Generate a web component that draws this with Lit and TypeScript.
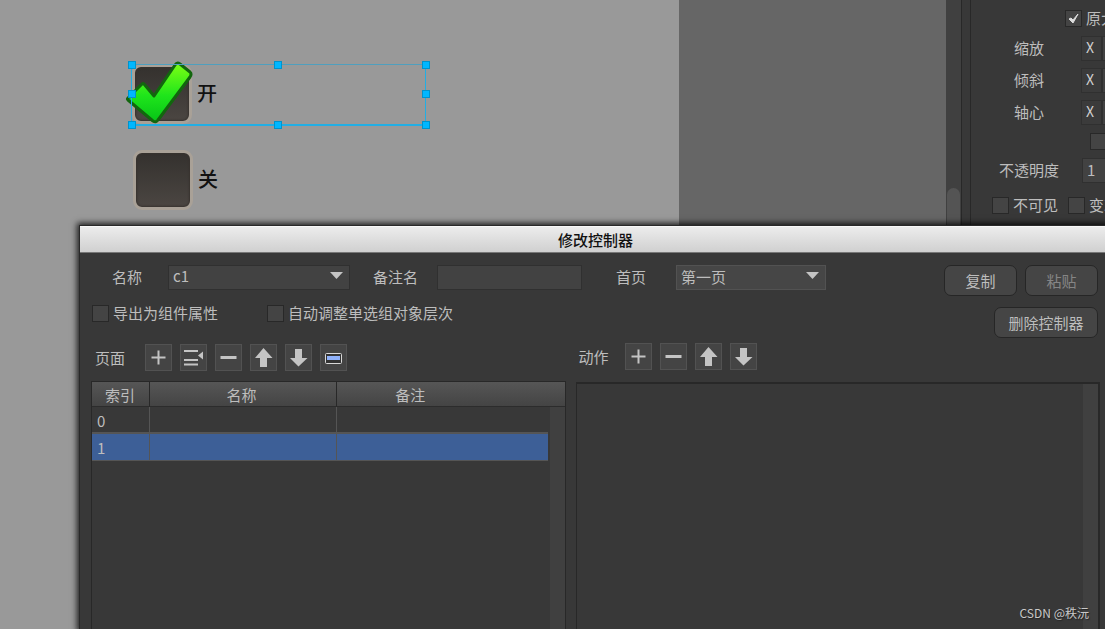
import { LitElement, html, css, svg } from "lit";
import { customElement, property, state } from "lit/decorators.js";

const glyphs: Record<string, unknown> = {
  add: svg`<path d="M13.5 6.5v14M6.5 13.5h14" stroke="#c4c4c4" stroke-width="2" fill="none"/>`,
  insert: svg`<path d="M4 7h14M4 16h14M4 20.5h14" stroke="#c4c4c4" stroke-width="2" fill="none"/><path d="M23 7.5v8l-5-4z" fill="#c4c4c4"/>`,
  remove: svg`<path d="M5.5 13.5h16" stroke="#c4c4c4" stroke-width="3" fill="none"/>`,
  up: svg`<path d="M13.5 4l9 10h-5.5v9h-7v-9H5z" fill="#c4c4c4"/>`,
  down: svg`<path d="M13.5 22.5l9-8.500h-5.5V5h-7v9H5z" fill="#c4c4c4"/>`,
  field: svg`<rect x="5.500" y="9.500" width="16" height="10" rx="1" fill="#333" stroke="#d8d8d8"/><rect x="7" y="12" width="13" height="4" fill="#8fb1fa"/>`,
};

@customElement("tool-button")
export class ToolButton extends LitElement {
  @property() icon = "add";
  @property() label = "";

  static styles = css`
    :host {
      display: block;
    }
    .tool {
      display: block;
      width: 27px;
      height: 27px;
      padding: 0;
      border: 1px solid #525252;
      background: #444;
    }
    .tool svg {
      display: block;
      margin: -1px;
    }
  `;

  render() {
    return html`<button class="tool" type="button" aria-label=${this.label}>
      <svg width="27" height="27" viewBox="0 0 27 27">${glyphs[this.icon]}</svg>
    </button>`;
  }
}

@customElement("app-root")
export class AppRoot extends LitElement {
  @state() private selected = 1;

  static styles = css`
    :host {
      display: block;
      position: relative;
      height: 100vh;
      overflow: hidden;
      background: #383838;
      color: #bdbdbd;
      font: 15px/20px "Noto Sans CJK SC", sans-serif;
    }
    * {
      box-sizing: border-box;
    }
    input,
    select,
    button {
      margin: 0;
      font: inherit;
      color: inherit;
      border-radius: 0;
      outline: none;
    }

    .workspace {
      display: flex;
      height: 100%;
    }
    .canvas {
      position: relative;
      flex: 679 1 0;
      background: #999;
    }
    .outside {
      flex: 267 1 0;
      background: #666;
    }
    .scrollbar {
      width: 15px;
      padding-top: 188px;
      background: #404040;
    }
    .thumb {
      height: 160px;
      margin: 0 1px;
      border-radius: 7px;
      background: #545454;
    }
    .splitter {
      width: 10px;
      border: 1px solid #282828;
      border-width: 0 1px;
    }

    .toggle {
      position: absolute;
      display: flex;
      align-items: center;
      gap: 5px;
      color: #111;
      font-size: 20px;
      font-weight: 500;
      line-height: 30px;
    }
    .toggle-on {
      left: 132px;
      top: 64px;
    }
    .toggle-off {
      left: 133px;
      top: 150px;
    }
    .toggle span {
      padding-bottom: 2px;
    }
    .big-box {
      appearance: none;
      width: 60px;
      height: 60px;
      border: 3px solid #a9a197;
      border-radius: 9px;
      background: linear-gradient(#34312e, #4b4642);
      box-shadow: inset 0 0 2px 1px #38332f;
    }
    .tick {
      position: absolute;
      left: -8px;
      top: -4px;
    }
    .selection {
      position: absolute;
      left: 131px;
      top: 64px;
      width: 295px;
      height: 62px;
      border: 1px solid #22aee4;
      border-bottom-width: 2px;
      border-top-color: #4f9fbe;
    }
    .handle {
      position: absolute;
      width: 8px;
      height: 8px;
      margin: -4px;
      border: 1px solid #0093cc;
      background: #00b7ff;
    }
    .w { left: 0; }
    .c { left: calc(50% - 1px); }
    .e { left: calc(100% + 1px); }
    .n { top: 0; }
    .m { top: calc(50% - 1px); }
    .s { top: calc(100% + 1px); }

    .inspector {
      width: 134px;
      padding-top: 4px;
      overflow: hidden;
      white-space: nowrap;
    }
    .prop {
      display: flex;
      align-items: center;
      height: 32px;
      padding-left: 43px;
    }
    .prop-size {
      height: 28px;
      padding-left: 94px;
    }
    .prop-lock {
      height: 26px;
      padding-left: 119px;
    }
    .prop-alpha {
      padding-left: 28px;
      gap: 23px;
    }
    .prop-flags {
      height: 38px;
      padding-left: 21px;
      gap: 10px;
    }
    .prop-name {
      width: 67px;
      flex: none;
    }
    .axis {
      flex: none;
      width: 21px;
      height: 25px;
      padding: 0 4px;
      border: 1px solid #303030;
      background: #3b3b3b;
      font-size: 14px;
      line-height: 21px;
      color: #d0d0d0;
    }
    .field {
      flex: none;
      width: 60px;
      height: 25px;
      padding: 0 4px 2px;
      border: 1px solid #303030;
      background: #424242;
    }

    .check {
      display: flex;
      align-items: center;
      gap: 4px;
      flex: none;
    }
    .box {
      appearance: none;
      flex: none;
      width: 17px;
      height: 17px;
      border: 1px solid #282828;
      background: #444;
    }
    .box:checked {
      background: #444
        url("data:image/svg+xml,%3Csvg xmlns='http://www.w3.org/2000/svg' viewBox='0 0 15 15'%3E%3Cpath d='M3 8l4 4 5-9-5 6-2-2z' fill='%23ddd' stroke='%23ddd'/%3E%3C/svg%3E");
    }

    .dialog {
      position: absolute;
      left: 80px;
      right: -6px;
      top: 226px;
      bottom: 0;
      display: flex;
      flex-direction: column;
      background: #383838;
      box-shadow: 0 0 0 1px #282828, 0 0 6px 3px rgba(0, 0, 0, 0.8);
    }
    .title {
      margin: 0;
      height: 27px;
      border-top: 1px solid #f8f8f8;
      border-bottom: 1px solid #777;
      background: linear-gradient(#ececec, #d0d0d0);
      color: #111;
      font-size: 15px;
      font-weight: 500;
      line-height: 26px;
      text-align: center;
    }
    .settings {
      display: flex;
      justify-content: space-between;
      height: 88px;
      padding: 12px 13px 0 12px;
    }
    .line {
      display: flex;
      align-items: center;
      height: 24px;
    }
    .line-fields {
      padding-left: 20px;
    }
    .line-fields label {
      flex: none;
      margin-right: 26px;
    }
    .line-fields .label-note {
      margin: 0 19px 0 23px;
    }
    .line-fields .label-home {
      margin: 0 30px 0 34px;
    }
    .line-checks {
      gap: 49px;
      margin-top: 12px;
    }
    .picker {
      position: relative;
      flex: none;
    }
    .picker svg {
      position: absolute;
      right: 7px;
      top: 7px;
      pointer-events: none;
    }
    .picker select {
      appearance: none;
      display: block;
      width: 182px;
      height: 25px;
      padding: 0 4px 2px;
      border: 1px solid #303030;
      background: #424242;
    }
    .picker .select-home {
      width: 150px;
      padding: 0 4px;
      border-color: #525252;
      background: #464646;
    }
    .note {
      width: 145px;
    }
    .actions {
      display: flex;
      flex-wrap: wrap;
      justify-content: flex-end;
      align-content: flex-start;
      gap: 11px 8px;
      width: 160px;
      flex: none;
    }
    .push {
      width: 73px;
      height: 31px;
      padding: 0;
      border: 1px solid #262626;
      border-radius: 7px;
      background: #454545;
    }
    .push-wide {
      width: 104px;
    }
    .push:disabled {
      color: #858585;
    }

    .lists {
      flex: 1;
      min-height: 0;
      display: grid;
      grid-template-columns: minmax(0, 475fr) minmax(0, 523fr);
      gap: 10px;
      padding: 0 11px;
    }
    .list {
      display: flex;
      flex-direction: column;
      min-height: 0;
    }
    .tools {
      display: flex;
      align-items: center;
      gap: 8px;
      height: 27px;
      margin: 3px 0 10px 4px;
    }
    .tools-actions {
      margin: 2px 0 12px 2px;
    }
    .tools-name {
      margin-right: 12px;
    }
    .tools-actions .tools-name {
      margin-right: 9px;
    }
    .pane {
      flex: 1;
      min-height: 0;
      border: 1px solid #282828;
      border-bottom: 0;
      background: linear-gradient(#404040, #404040) right / 15px 100% no-repeat;
    }
    .pane-actions {
      border-top-width: 2px;
      border-right-width: 2px;
    }
    .pages {
      width: 100%;
      table-layout: fixed;
      border-collapse: separate;
      border-spacing: 0;
    }
    .col-index { width: 58px; }
    .col-name { width: 187px; }
    .col-gutter { width: 17px; }
    .pages th {
      height: 25px;
      padding: 2px 3px 0 0;
      border-right: 1px solid #282828;
      border-bottom: 1px solid #2c2c2c;
      background: linear-gradient(#565656, #444);
      font-weight: 400;
      line-height: 20px;
    }
    .pages .th-index {
      padding-right: 1px;
    }
    .pages .th-note {
      padding-right: 82px;
      border-right: 0;
    }
    .pages td {
      height: 27px;
      padding: 3px 5px 0;
      border-right: 1px solid #555;
      border-bottom: 2px solid #555;
      line-height: 20px;
    }
    .pages .td-note {
      border-right: 0;
    }
    .pages .td-gutter {
      border: 0;
    }
    .pages .selected td {
      padding-top: 2px;
    }
    .pages .selected td:not(.td-gutter) {
      background: #3d5f97;
      border-bottom-width: 1px;
    }
    .credit {
      position: absolute;
      right: 16px;
      bottom: 6px;
      color: #c8c8c8;
      font-size: 12px;
      text-shadow: 1px 1px 1px #222;
    }
  `;

  private arrow() {
    return html`<svg width="13" height="7" viewBox="0 0 13 7">
      <path d="M0 0h13L6.5 7z" fill="#c4c4c4" />
    </svg>`;
  }

  private axisRow(name: string) {
    return html`<div class="prop">
      <span class="prop-name">${name}</span>
      <span class="axis">X</span>
      <input class="field" aria-label="${name} X" />
    </div>`;
  }

  private pageRow(index: number) {
    return html`<tr
      class=${index === this.selected ? "selected" : ""}
      @click=${() => (this.selected = index)}
    >
      <td>${index}</td>
      <td></td>
      <td class="td-note"></td>
      <td class="td-gutter"></td>
    </tr>`;
  }

  render() {
    const handles = ["w n", "c n", "e n", "w m", "e m", "w s", "c s", "e s"];
    return html`
      <main class="workspace">
        <section class="canvas">
          <label class="toggle toggle-on">
            <input class="big-box" type="checkbox" checked />
            <svg class="tick" width="70" height="66" viewBox="0 0 70 66">
              <defs>
                <linearGradient id="leaf" x1="0" y1="0" x2="0" y2="1">
                  <stop offset="0" stop-color="#7dff14" />
                  <stop offset=".55" stop-color="#1fe51b" />
                  <stop offset="1" stop-color="#06c417" />
                </linearGradient>
              </defs>
              <path
                d="M4 38 18 24Q19 23 20 24L30 36 51 5Q53 2 56 4L66 12Q68 14 66 17L34 60Q32 63 29 61L4 40Q3 39 4 38Z"
                fill="url(#leaf)"
                stroke="#12660e"
                stroke-width="3"
                stroke-linejoin="round"
              />
            </svg>
            <span>开</span>
          </label>
          <label class="toggle toggle-off">
            <input class="big-box" type="checkbox" />
            <span>关</span>
          </label>
          <div class="selection">
            ${handles.map((h) => html`<i class="handle ${h}"></i>`)}
          </div>
        </section>
        <div class="outside"></div>
        <div class="scrollbar"><div class="thumb"></div></div>
        <div class="splitter"></div>
        <aside class="inspector">
          <div class="prop prop-size">
            <label class="check"><input class="box" type="checkbox" checked />原大小</label>
          </div>
          ${["缩放", "倾斜", "轴心"].map((n) => this.axisRow(n))}
          <div class="prop prop-lock">
            <input class="box" type="checkbox" aria-label="轴心" />
          </div>
          <div class="prop prop-alpha">
            <label for="alpha">不透明度</label>
            <input class="field" id="alpha" value="1" />
          </div>
          <div class="prop prop-flags">
            <label class="check"><input class="box" type="checkbox" />不可见</label>
            <label class="check"><input class="box" type="checkbox" />变灰</label>
          </div>
        </aside>
      </main>

      <section class="dialog" role="dialog" aria-labelledby="title">
        <h1 class="title" id="title">修改控制器</h1>
        <div class="settings">
          <div>
            <div class="line line-fields">
              <label for="name">名称</label>
              <div class="picker">
                <select id="name"><option>c1</option></select>
                ${this.arrow()}
              </div>
              <label class="label-note" for="note">备注名</label>
              <input class="field note" id="note" />
              <label class="label-home" for="home">首页</label>
              <div class="picker">
                <select class="select-home" id="home"><option>第一页</option></select>
                ${this.arrow()}
              </div>
            </div>
            <div class="line line-checks">
              <label class="check"><input class="box" type="checkbox" />导出为组件属性</label>
              <label class="check"><input class="box" type="checkbox" />自动调整单选组对象层次</label>
            </div>
          </div>
          <div class="actions">
            <button class="push" type="button">复制</button>
            <button class="push" type="button" disabled>粘贴</button>
            <button class="push push-wide" type="button">删除控制器</button>
          </div>
        </div>
        <div class="lists">
          <div class="list">
            <div class="tools">
              <span class="tools-name">页面</span>
              <tool-button icon="add" label="添加"></tool-button>
              <tool-button icon="insert" label="插入"></tool-button>
              <tool-button icon="remove" label="删除"></tool-button>
              <tool-button icon="up" label="上移"></tool-button>
              <tool-button icon="down" label="下移"></tool-button>
              <tool-button icon="field" label="备注"></tool-button>
            </div>
            <div class="pane">
              <table class="pages">
                <colgroup>
                  <col class="col-index" />
                  <col class="col-name" />
                  <col />
                  <col class="col-gutter" />
                </colgroup>
                <thead>
                  <tr>
                    <th class="th-index">索引</th>
                    <th>名称</th>
                    <th class="th-note" colspan="2">备注</th>
                  </tr>
                </thead>
                <tbody>
                  ${[0, 1].map((i) => this.pageRow(i))}
                </tbody>
              </table>
            </div>
          </div>
          <div class="list">
            <div class="tools tools-actions">
              <span class="tools-name">动作</span>
              <tool-button icon="add" label="添加"></tool-button>
              <tool-button icon="remove" label="删除"></tool-button>
              <tool-button icon="up" label="上移"></tool-button>
              <tool-button icon="down" label="下移"></tool-button>
            </div>
            <div class="pane pane-actions"></div>
          </div>
        </div>
      </section>
      <div class="credit">CSDN @秩沅</div>
    `;
  }
}
